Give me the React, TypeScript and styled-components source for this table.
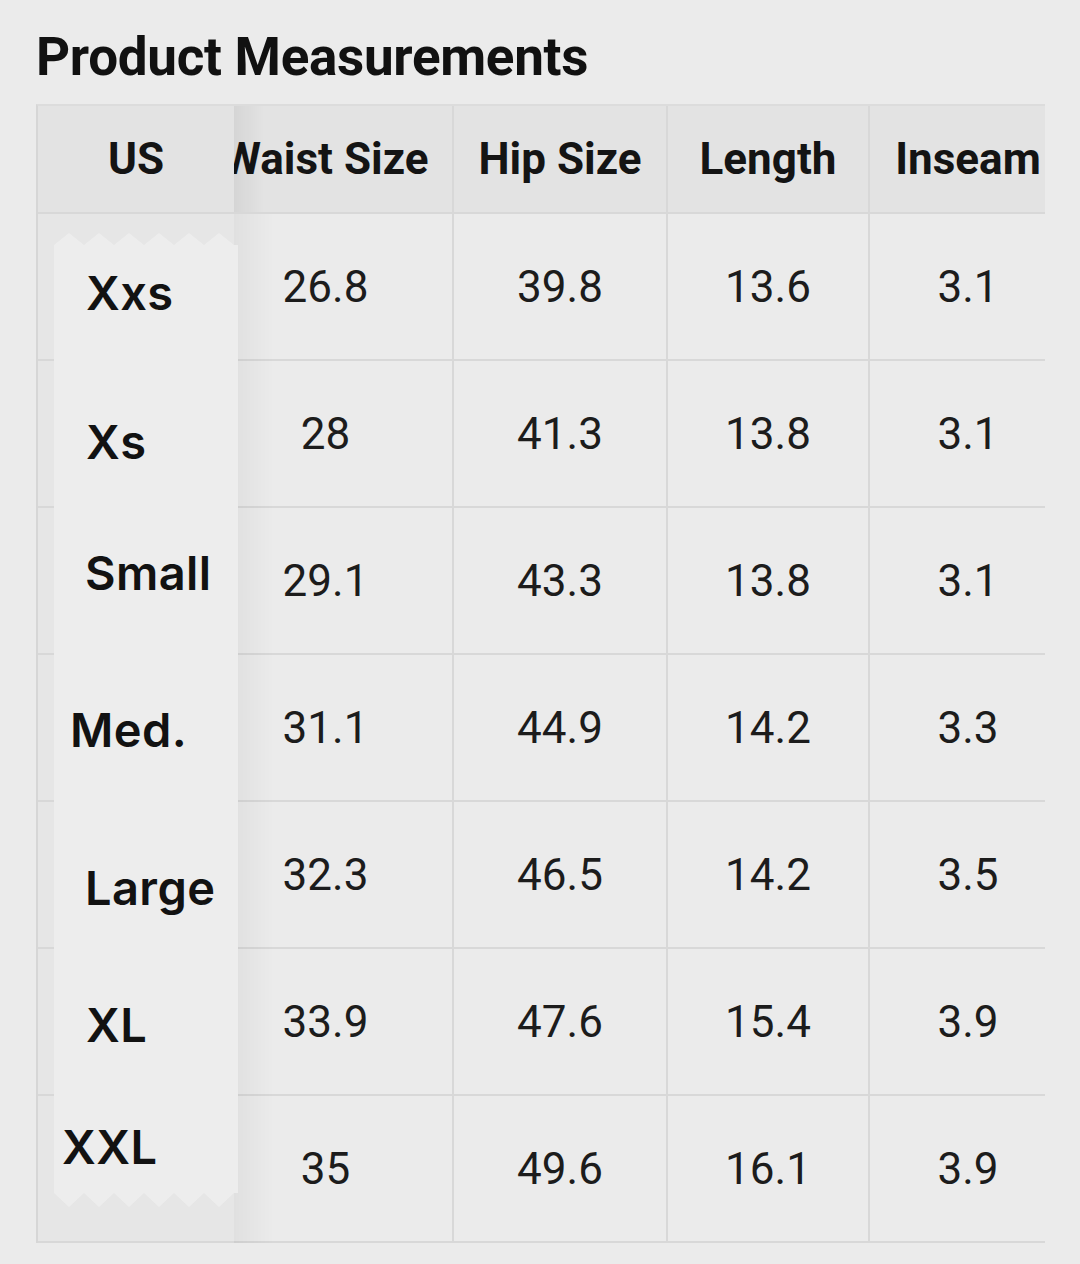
import * as React from "react";
import styled, { createGlobalStyle } from "styled-components";

const GlobalStyle = createGlobalStyle`
  html, body {
    margin: 0;
    padding: 0;
    background: #ebebeb;
  }
`;

// torn-label edge: teeth along the top and bottom of the size tag
const TAG_W = 184;
const zigzag = (() => {
  const step = 15;
  const top: string[] = [];
  const bottom: string[] = [];
  for (let x = 0, i = 0; x <= TAG_W; x += step, i++) {
    top.push(`${x}px ${i % 2 === 0 ? 33 : 21}px`);
    bottom.push(`${x}px ${i % 2 === 0 ? 981 : 995}px`);
  }
  top.push(`${TAG_W}px 33px`, `${TAG_W}px 981px`);
  bottom.push(`${TAG_W}px 981px`);
  return `polygon(${[...top, ...bottom.reverse()].join(", ")})`;
})();

const Page = styled.div`
  box-sizing: border-box;
  min-height: 1264px;
  padding: 28px 35px 20px 36px;
  background: #ebebeb;
  font-family: Roboto, "Liberation Sans", sans-serif;
  color: #151515;
`;

const Title = styled.h1`
  margin: 0 0 18px;
  font-size: 53px;
  font-weight: 700;
  line-height: 58px;
  color: #111;
  letter-spacing: -0.3px;
`;

const Frame = styled.div`
  position: relative;
`;

const Scroller = styled.div`
  overflow: hidden;
  border-left: 2px solid #d6d6d6;
  border-top: 2px solid #dcdcdc;
`;

const Table = styled.table`
  table-layout: fixed;
  width: 1066px;
  border-collapse: collapse;
`;

const Col = styled.col<{ $w: number }>`
  width: ${(p) => p.$w}px;
`;

const HeadCell = styled.th<{ $sticky?: boolean }>`
  height: 106px;
  padding: 0;
  background: #e3e3e3;
  border-right: 2px solid #d8d8d8;
  border-bottom: 2px solid #d8d8d8;
  font-size: 44px;
  font-weight: 700;
  text-align: center;
  white-space: nowrap;
  overflow: hidden;
  color: #141414;
  ${(p) =>
    p.$sticky &&
    `
    position: sticky;
    left: 0;
    z-index: 2;
    overflow: visible;
    &::after {
      content: "";
      position: absolute;
      top: 0;
      bottom: 0;
      right: -30px;
      width: 30px;
      background: linear-gradient(to right, rgba(0,0,0,0.06), rgba(0,0,0,0));
      pointer-events: none;
    }
  `}
`;

const Cell = styled.td<{ $sticky?: boolean }>`
  height: 145px;
  padding: 0;
  background: ${(p) => (p.$sticky ? "#e6e6e6" : "#ebebeb")};
  border-right: 2px solid #d8d8d8;
  border-bottom: 2px solid #d8d8d8;
  font-size: 44px;
  font-weight: 400;
  text-align: center;
  color: #1c1c1c;
  ${(p) =>
    p.$sticky &&
    `
    position: sticky;
    left: 0;
    z-index: 2;
    &::after {
      content: "";
      position: absolute;
      top: 0;
      bottom: -2px;
      right: -40px;
      width: 40px;
      background: linear-gradient(to right, rgba(0,0,0,0.045), rgba(0,0,0,0));
      pointer-events: none;
    }
  `}
`;

const Tag = styled.div`
  position: absolute;
  left: 18px;
  top: 108px;
  width: ${TAG_W}px;
  height: 1030px;
  z-index: 3;
  background: #ededed;
  clip-path: ${zigzag};
  display: grid;
  grid-template-rows: repeat(7, 147px);
  font-family: Inter, "Noto Sans", sans-serif;
  font-weight: 600;
  font-size: 47px;
  color: #121212;
`;

const TagLabel = styled.div<{ $dx: number; $dy: number }>`
  display: flex;
  align-items: center;
  padding-left: ${(p) => p.$dx}px;
  transform: translateY(${(p) => p.$dy}px);
  letter-spacing: 0.4px;
`;

const sizes = [
  { label: "Xxs", dx: 32, dy: 7, values: ["26.8", "39.8", "13.6", "3.1"] },
  { label: "Xs", dx: 32, dy: 9, values: ["28", "41.3", "13.8", "3.1"] },
  { label: "Small", dx: 31, dy: -7, values: ["29.1", "43.3", "13.8", "3.1"] },
  { label: "Med.", dx: 16, dy: 3, values: ["31.1", "44.9", "14.2", "3.3"] },
  { label: "Large", dx: 31, dy: 14, values: ["32.3", "46.5", "14.2", "3.5"] },
  { label: "XL", dx: 32, dy: 4, values: ["33.9", "47.6", "15.4", "3.9"] },
  { label: "XXL", dx: 8, dy: -21, values: ["35", "49.6", "16.1", "3.9"] },
];

const headers = ["Waist Size", "Hip Size", "Length", "Inseam"];
const widths = [197, 255, 214, 202, 198];

export default function App() {
  const scroller = React.useRef<HTMLDivElement>(null);

  React.useLayoutEffect(() => {
    if (scroller.current) scroller.current.scrollLeft = 37;
  }, []);

  return (
    <>
      <GlobalStyle />
      <Page>
        <Title>Product Measurements</Title>
        <Frame>
          <Scroller ref={scroller}>
            <Table>
              <colgroup>
                {widths.map((w, i) => (
                  <Col key={i} $w={w} />
                ))}
              </colgroup>
              <thead>
                <tr>
                  <HeadCell $sticky>US</HeadCell>
                  {headers.map((h) => (
                    <HeadCell key={h}>{h}</HeadCell>
                  ))}
                </tr>
              </thead>
              <tbody>
                {sizes.map((s) => (
                  <tr key={s.label}>
                    <Cell $sticky />
                    {s.values.map((v, i) => (
                      <Cell key={i}>{v}</Cell>
                    ))}
                  </tr>
                ))}
              </tbody>
            </Table>
          </Scroller>
          <Tag>
            {sizes.map((s) => (
              <TagLabel key={s.label} $dx={s.dx} $dy={s.dy}>
                {s.label}
              </TagLabel>
            ))}
          </Tag>
        </Frame>
      </Page>
    </>
  );
}
